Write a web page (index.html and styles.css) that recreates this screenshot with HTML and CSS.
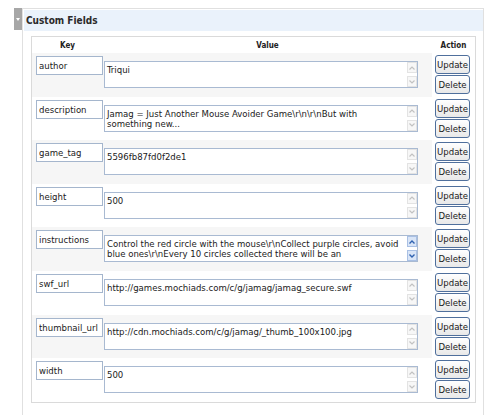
FILE: index.html
```html
<html>
	<head>
		<title>Custom Fields</title>
		<link rel="stylesheet" href="styles.css">
	</head>
	<body>
		<div class="page">
			<div class="handle"><span class="tri"></span></div>
			<div class="postbox">
				<h3 class="hndle">Custom Fields</h3>
				<div class="inside">
					<div class="meta">
						<div class="meta-head">
							<div>Key</div>
							<div>Value</div>
							<div>Action</div>
						</div>

						<div class="meta-row alt">
							<div class="key"><input type="text" value="author"></div>
							<div class="val">
								<div class="ta">
									<div class="ta-text">Triqui</div>
									<div class="sb"><span class="arr up"></span><span class="arr down"></span></div>
								</div>
							</div>
							<div class="act"><button>Update</button><button>Delete</button></div>
						</div>

						<div class="meta-row">
							<div class="key"><input type="text" value="description"></div>
							<div class="val">
								<div class="ta">
									<div class="ta-text">Jamag = Just Another Mouse Avoider Game\r\n\r\nBut with<br>something new...</div>
									<div class="sb"><span class="arr up"></span><span class="arr down"></span></div>
								</div>
							</div>
							<div class="act"><button>Update</button><button>Delete</button></div>
						</div>

						<div class="meta-row alt">
							<div class="key"><input type="text" value="game_tag"></div>
							<div class="val">
								<div class="ta">
									<div class="ta-text">5596fb87fd0f2de1</div>
									<div class="sb"><span class="arr up"></span><span class="arr down"></span></div>
								</div>
							</div>
							<div class="act"><button>Update</button><button>Delete</button></div>
						</div>

						<div class="meta-row">
							<div class="key"><input type="text" value="height"></div>
							<div class="val">
								<div class="ta">
									<div class="ta-text">500</div>
									<div class="sb"><span class="arr up"></span><span class="arr down"></span></div>
								</div>
							</div>
							<div class="act"><button>Update</button><button>Delete</button></div>
						</div>

						<div class="meta-row alt">
							<div class="key"><input type="text" value="instructions"></div>
							<div class="val">
								<div class="ta">
									<div class="ta-text">Control the red circle with the mouse\r\nCollect purple circles, avoid<br>blue ones\r\nEvery 10 circles collected there will be an</div>
									<div class="sb active"><span class="arr up"></span><span class="arr down"></span></div>
								</div>
							</div>
							<div class="act"><button>Update</button><button>Delete</button></div>
						</div>

						<div class="meta-row">
							<div class="key"><input type="text" value="swf_url"></div>
							<div class="val">
								<div class="ta">
									<div class="ta-text">http://games.mochiads.com/c/g/jamag/jamag_secure.swf</div>
									<div class="sb"><span class="arr up"></span><span class="arr down"></span></div>
								</div>
							</div>
							<div class="act"><button>Update</button><button>Delete</button></div>
						</div>

						<div class="meta-row alt">
							<div class="key"><input type="text" value="thumbnail_url"></div>
							<div class="val">
								<div class="ta">
									<div class="ta-text">http://cdn.mochiads.com/c/g/jamag/_thumb_100x100.jpg</div>
									<div class="sb"><span class="arr up"></span><span class="arr down"></span></div>
								</div>
							</div>
							<div class="act"><button>Update</button><button>Delete</button></div>
						</div>

						<div class="meta-row">
							<div class="key"><input type="text" value="width"></div>
							<div class="val">
								<div class="ta">
									<div class="ta-text">500</div>
									<div class="sb"><span class="arr up"></span><span class="arr down"></span></div>
								</div>
							</div>
							<div class="act"><button>Update</button><button>Delete</button></div>
						</div>
					</div>
				</div>
			</div>
		</div>
	</body>
</html>
```

FILE: styles.css
```css
body {
	margin: 0px;
	font-family: "DejaVu Sans Condensed", "DejaVu Sans", sans-serif;
	font-stretch: condensed;
	font-size: 9.5px;
	color: #222;
	background: #fff;
}
.page {
	display: flex;
	align-items: flex-start;
	padding: 8px 0 0 14px;
}
.handle {
	width: 8px;
	height: 22px;
	background: #a7a7a7;
	display: flex;
	align-items: center;
	justify-content: center;
}
.tri {
	width: 0;
	height: 0;
	border-top: 3px solid #fff;
	border-left: 2px solid transparent;
	border-right: 2px solid transparent;
}
.postbox {
	width: 460px;
	min-height: 420px;
	border: 1px solid #e0e0e0;
}
.hndle {
	margin: 1px 0 0 1px;
	height: 21px;
	line-height: 21px;
	padding-left: 2px;
	background: #eaf2fb;
	font-size: 10px;
	font-weight: bold;
	color: #2a2a2a;
}
.inside {
	padding: 5px 7px 0 8px;
}
.meta {
	border: 1px solid #dadada;
}
.meta-head,
.meta-row {
	display: grid;
	grid-template-columns: 71px 329px 43px;
}
.meta-head {
	box-sizing: border-box;
	height: 16px;
	padding-top: 3px;
	line-height: 12px;
	font-size: 8px;
	font-weight: bold;
	text-align: center;
	color: #222;
}
.meta-row {
	height: 43.6px;
}
.meta-row.alt .key,
.meta-row.alt .val {
	background: #f6f6f6;
}
.key {
	padding: 3px 0 0 4px;
}
.key input {
	display: block;
	box-sizing: border-box;
	width: 67px;
	height: 19px;
	margin: 0;
	padding: 0 2px;
	border: 1px solid #a5b6cd;
	background: #fff;
	font-family: inherit;
	font-stretch: condensed;
	font-size: 9.5px;
	color: #1a1a1a;
}
.val {
	padding: 8px 0 0 1px;
}
.ta {
	display: flex;
	box-sizing: border-box;
	width: 314px;
	height: 27px;
	border: 1px solid #a9bad2;
	background: #fff;
}
.ta-text {
	flex: 1;
	padding: 3px 0 0 2px;
	line-height: 10px;
	white-space: nowrap;
	overflow: hidden;
	color: #1a1a1a;
}
.sb {
	width: 10px;
	display: flex;
	flex-direction: column;
	justify-content: space-between;
}
.arr {
	display: block;
	box-sizing: border-box;
	height: 11px;
	border: 1px solid #e3e3e3;
	background: #f7f7f7 no-repeat center;
}
.arr.up {
	background-image: url("data:image/svg+xml,%3Csvg xmlns='http://www.w3.org/2000/svg' width='6' height='4'%3E%3Cpolyline points='0.5,3.5 3,1 5.5,3.5' fill='none' stroke='%23c2c2c2' stroke-width='1.2'/%3E%3C/svg%3E");
}
.arr.down {
	background-image: url("data:image/svg+xml,%3Csvg xmlns='http://www.w3.org/2000/svg' width='6' height='4'%3E%3Cpolyline points='0.5,0.5 3,3 5.5,0.5' fill='none' stroke='%23c2c2c2' stroke-width='1.2'/%3E%3C/svg%3E");
}
.sb.active .arr {
	border-color: #a9c0e4;
	background-color: #d9e5f7;
}
.sb.active .arr.up {
	background-image: url("data:image/svg+xml,%3Csvg xmlns='http://www.w3.org/2000/svg' width='6' height='4'%3E%3Cpolyline points='0.5,3.5 3,1 5.5,3.5' fill='none' stroke='%232f62b0' stroke-width='1.4'/%3E%3C/svg%3E");
}
.sb.active .arr.down {
	background-image: url("data:image/svg+xml,%3Csvg xmlns='http://www.w3.org/2000/svg' width='6' height='4'%3E%3Cpolyline points='0.5,0.5 3,3 5.5,0.5' fill='none' stroke='%232f62b0' stroke-width='1.4'/%3E%3C/svg%3E");
}
.act {
	display: flex;
	flex-direction: column;
	gap: 1px;
	padding: 2px 0 0 3px;
}
.act button {
	display: block;
	width: 35px;
	height: 19px;
	margin: 0;
	padding: 0;
	border: 1px solid #4f6f9c;
	border-radius: 3px;
	background: linear-gradient(#ffffff, #e8e8e8);
	font-family: inherit;
	font-stretch: condensed;
	font-size: 9.5px;
	color: #1a1a1a;
	cursor: pointer;
}
```
